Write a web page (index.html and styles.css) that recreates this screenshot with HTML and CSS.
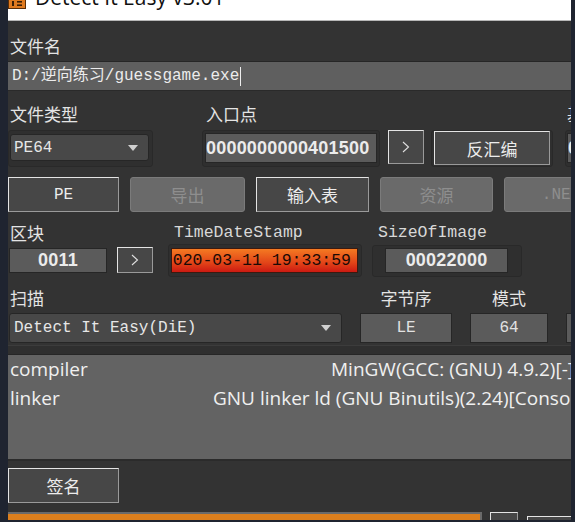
FILE: index.html
```html
<!DOCTYPE html>
<html lang="zh-CN">
<head>
<meta charset="utf-8">
<title>Detect It Easy v3.01</title>
<link rel="stylesheet" href="styles.css">
</head>
<body>
<div class="window">
  <div class="titlebar">
    <svg class="logo" width="18" height="9" viewBox="0 0 18 9">
      <rect x="0.5" y="-2" width="17" height="10.5" fill="#e07a1f" stroke="#5a2e08"/>
      <rect x="4" y="1" width="2" height="5" fill="#3a1e06"/>
      <rect x="9" y="1" width="5" height="1.6" fill="#3a1e06"/>
      <rect x="9" y="4.4" width="5" height="1.6" fill="#3a1e06"/>
    </svg>
    <span class="title">Detect It Easy v3.01</span>
  </div>

  <div class="lbl l-file">文件名</div>
  <div class="path">D:/逆向练习/guessgame.exe<span class="caret"></span></div>

  <div class="row labels2">
    <span class="lbl w-type">文件类型</span>
    <span class="lbl w-ep">入口点</span>
    <span class="lbl">基址</span>
  </div>

  <div class="row row3">
    <div class="frame f-type">
      <div class="combo c-type"><span>PE64</span><i class="arrow"></i></div>
    </div>
    <div class="frame f-ep">
      <div class="field bold f-epv">0000000000401500</div>
    </div>
    <div class="btn b-go"><svg width="8" height="12" viewBox="0 0 8 12"><polyline points="1,1 6.5,6 1,11" fill="none" stroke="#e0e0e0" stroke-width="1.1"/></svg></div>
    <div class="frame f-asm">
      <div class="btn b-asm">反汇编</div>
    </div>
    <div class="frame f-base">
      <div class="field bold f-basev">0000000140000000</div>
    </div>
  </div>

  <div class="btnrow">
    <div class="btn b-wide mono">PE</div>
    <div class="btn dis">导出</div>
    <div class="btn b-wide">输入表</div>
    <div class="btn dis">资源</div>
    <div class="btn dis mono">.NET</div>
  </div>

  <div class="row labels5">
    <span class="lbl w-sec">区块</span>
    <span class="lbl mono-lbl w-tds">TimeDateStamp</span>
    <span class="lbl mono-lbl">SizeOfImage</span>
  </div>

  <div class="row row6">
    <div class="field bold f-sec">0011</div>
    <div class="btn b-go2"><svg width="8" height="12" viewBox="0 0 8 12"><polyline points="1,1 6.5,6 1,11" fill="none" stroke="#e0e0e0" stroke-width="1.1"/></svg></div>
    <div class="frame f-tds">
      <div class="tds"><span>2020-03-11 19:33:59</span></div>
    </div>
    <div class="frame f-soi">
      <div class="field bold f-soiv">00022000</div>
    </div>
  </div>

  <div class="grid4 labels7">
    <span class="lbl">扫描</span>
    <span class="lbl center">字节序</span>
    <span class="lbl center">模式</span>
    <span class="lbl"></span>
  </div>

  <div class="grid4 row8">
    <div class="combo c-scan"><span>Detect It Easy(DiE)</span><i class="arrow"></i></div>
    <div class="field mono-field">LE</div>
    <div class="field mono-field">64</div>
    <div class="field mono-field"></div>
  </div>

  <div class="sep"></div>
  <div class="results">
    <div class="res-row"><span class="name">compiler</span><span class="val v-compiler">MinGW(GCC: (GNU) 4.9.2)[-]</span></div>
    <div class="res-row"><span class="name">linker</span><span class="val v-linker">GNU linker ld (GNU Binutils)(2.24)[Console64,console]</span></div>
  </div>

  <div class="btn b-sign">签名</div>

  <div class="row bottom">
    <div class="progress"><div class="fill"></div></div>
    <div class="btn mini"></div>
    <div class="btn mini2"></div>
  </div>
</div>
</body>
</html>
```

FILE: styles.css
```css
* { box-sizing: border-box; }
html, body { margin: 0; padding: 0; }
body {
  width: 575px;
  height: 522px;
  overflow: hidden;
  background: #1f2430;
}
.window {
  margin-left: 8px;
  width: 563px;
  height: 520px;
  background: #333333;
  overflow: hidden;
  color: #e4e4e4;
  font-family: "Noto Sans CJK SC", sans-serif;
}
.titlebar {
  height: 21px;
  background: #ffffff;
  border-bottom: 1px solid #b8b8b8;
  display: flex;
  align-items: flex-start;
  overflow: hidden;
}
.logo { display: block; flex: none; }
.title {
  margin-left: 9px;
  margin-top: -14px;
  font: 21px/22px "Open Sans", sans-serif;
  color: #111;
  white-space: nowrap;
}
.row { display: flex; align-items: flex-start; }
.row > * { flex: none; }
.lbl {
  display: block;
  height: 22px;
  line-height: 22px;
  font-size: 17px;
  white-space: nowrap;
  color: #e4e4e4;
}
.mono-lbl { font-family: "Liberation Mono", monospace; font-size: 16.5px; color: #d8d8d8; }
.center { text-align: center; }
.l-file { margin: 14px 0 0 2px; }
.path {
  margin-top: 4px;
  height: 30px;
  background: #5f5f5f;
  border-top: 1px solid #262626;
  border-bottom: 1px solid #2a2a2a;
  font: 16px/28px "Liberation Mono", "Noto Sans CJK SC", monospace;
  padding-left: 4px;
  color: #ececec;
  white-space: nowrap;
  display: flex;
  align-items: center;
}
.caret { display: block; width: 1px; height: 19px; background: #eee; margin-left: 1px; }

.labels2 { margin-top: 12px; }
.w-type { width: 196px; margin-left: 2px; }
.w-ep { width: 361px; }

.frame {
  background: #2f2f2f;
  border: 1px solid #292929;
  border-radius: 3px;
}
.row3 { margin-top: 5px; height: 37px; }
.f-type { width: 145px; height: 37px; padding: 3px 0 0 1px; }
.combo {
  display: flex;
  align-items: center;
  justify-content: space-between;
  background: #484848;
  border: 1px solid #262626;
  border-radius: 3px;
  font: 16px "Liberation Mono", monospace;
  color: #e6e6e6;
  padding: 0 10px 0 3px;
  white-space: nowrap;
}
.c-type { width: 139px; height: 27px; }
.arrow {
  display: block;
  width: 0; height: 0;
  border-left: 5px solid transparent;
  border-right: 5px solid transparent;
  border-top: 6px solid #d0d0d0;
}
.field {
  background: #5b5b5b;
  border: 1px solid #262626;
  color: #ececec;
  display: flex;
  align-items: center;
  justify-content: center;
  white-space: nowrap;
  overflow: hidden;
}
.bold { font: bold 18px "Liberation Sans", sans-serif; letter-spacing: 0.2px; }
.f-ep { width: 178px; height: 37px; margin-left: 49px; padding: 2px 0 0 2px; }
.f-epv { width: 172px; height: 30px; justify-content: flex-start; padding-left: 0; }

.btn {
  height: 35px;
  background: #474747;
  border: 1px solid;
  border-color: #e4e4e4 #9a9a9a #9a9a9a #e4e4e4;
  color: #ececec;
  display: flex;
  align-items: center;
  justify-content: center;
  font-size: 17px;
  white-space: nowrap;
}
.mono { font-family: "Liberation Mono", monospace; font-size: 16px; }
.b-go { width: 36px; height: 34px; margin-left: 8px; }
.f-asm { width: 122px; height: 37px; margin-left: 7px; padding: 0 0 0 2px; }
.b-asm { width: 116px; height: 34px; }
.f-base { width: 60px; height: 37px; margin-left: 12px; padding: 2px 0 0 1px; overflow: hidden; }
.f-basev { width: 200px; height: 30px; justify-content: flex-start; }

.btnrow {
  margin-top: 10px;
  display: grid;
  grid-template-columns: 111px 115px 113px 113px 114px;
  column-gap: 11px;
}
.btnrow .btn { height: 35px; }
.btn.dis {
  background: #6a6a6a;
  border: 1px solid #7b7b7b;
  border-radius: 3px;
  color: #8e8e8e;
}

.labels5 { margin-top: 10px; }
.w-sec { width: 164px; margin-left: 2px; }
.w-tds { width: 204px; }

.row6 { height: 33px; }
.f-sec { width: 98px; height: 25px; margin: 4px 0 0 1px; }
.b-go2 { width: 36px; height: 26px; margin: 3px 0 0 10px; }
.f-tds { width: 194px; height: 33px; margin-left: 15px; padding: 3px 0 0 2px; }
.tds {
  width: 187px;
  height: 25px;
  background: linear-gradient(#f47a22, #e24418 60%, #cc1a12);
  border: 1px solid #3a1a10;
  display: flex;
  align-items: center;
  justify-content: flex-end;
  padding-right: 6px;
  overflow: hidden;
  white-space: nowrap;
  font: 16.5px "Liberation Mono", monospace;
  color: #1a0a05;
}
.tds span { flex: none; }
.f-soi { width: 150px; height: 32px; margin: 1px 0 0 10px; padding: 2px 0 0 12px; }
.f-soiv { width: 123px; height: 25px; }

.grid4 {
  display: grid;
  grid-template-columns: 333px 92px 78px 60px;
  column-gap: 18px;
  padding-left: 1px;
}
.labels7 { margin-top: 10px; }
.labels7 .lbl:first-child { padding-left: 1px; }
.row8 { margin-top: 4px; height: 30px; }
.c-scan { height: 30px; padding-left: 4px; }
.mono-field { height: 30px; font: 16px "Liberation Mono", monospace; color: #e2e2e2; }

.sep {
  margin-top: 2px;
  height: 10px;
  background: #2f2f2f;
  border-top: 1px solid #3c3c3c;
  border-bottom: 1px solid #262626;
}
.results {
  height: 106px;
  background: #636363;
  border-bottom: 2px solid #2b2b2b;
  font: 19px/29px "Open Sans", sans-serif;
  color: #f0f0f0;
  white-space: nowrap;
  overflow: hidden;
}
.res-row { display: flex; height: 29px; padding-left: 2px; }
.res-row > * { flex: none; }
.name { width: 0; overflow: visible; }
.v-compiler { margin-left: 321px; }
.v-linker { margin-left: 203px; }

.b-sign { width: 111px; height: 35px; margin-top: 7px; }

.bottom { margin-top: 9px; }
.progress {
  width: 474px;
  height: 8px;
  background: #6a6a6a;
  padding: 2px 2px 0 0;
}
.fill { height: 6px; background: #dc7f1d; }
.mini { width: 28px; height: 10px; margin-left: 8px; }
.mini2 { width: 60px; height: 10px; margin: 4px 0 0 9px; }
```
